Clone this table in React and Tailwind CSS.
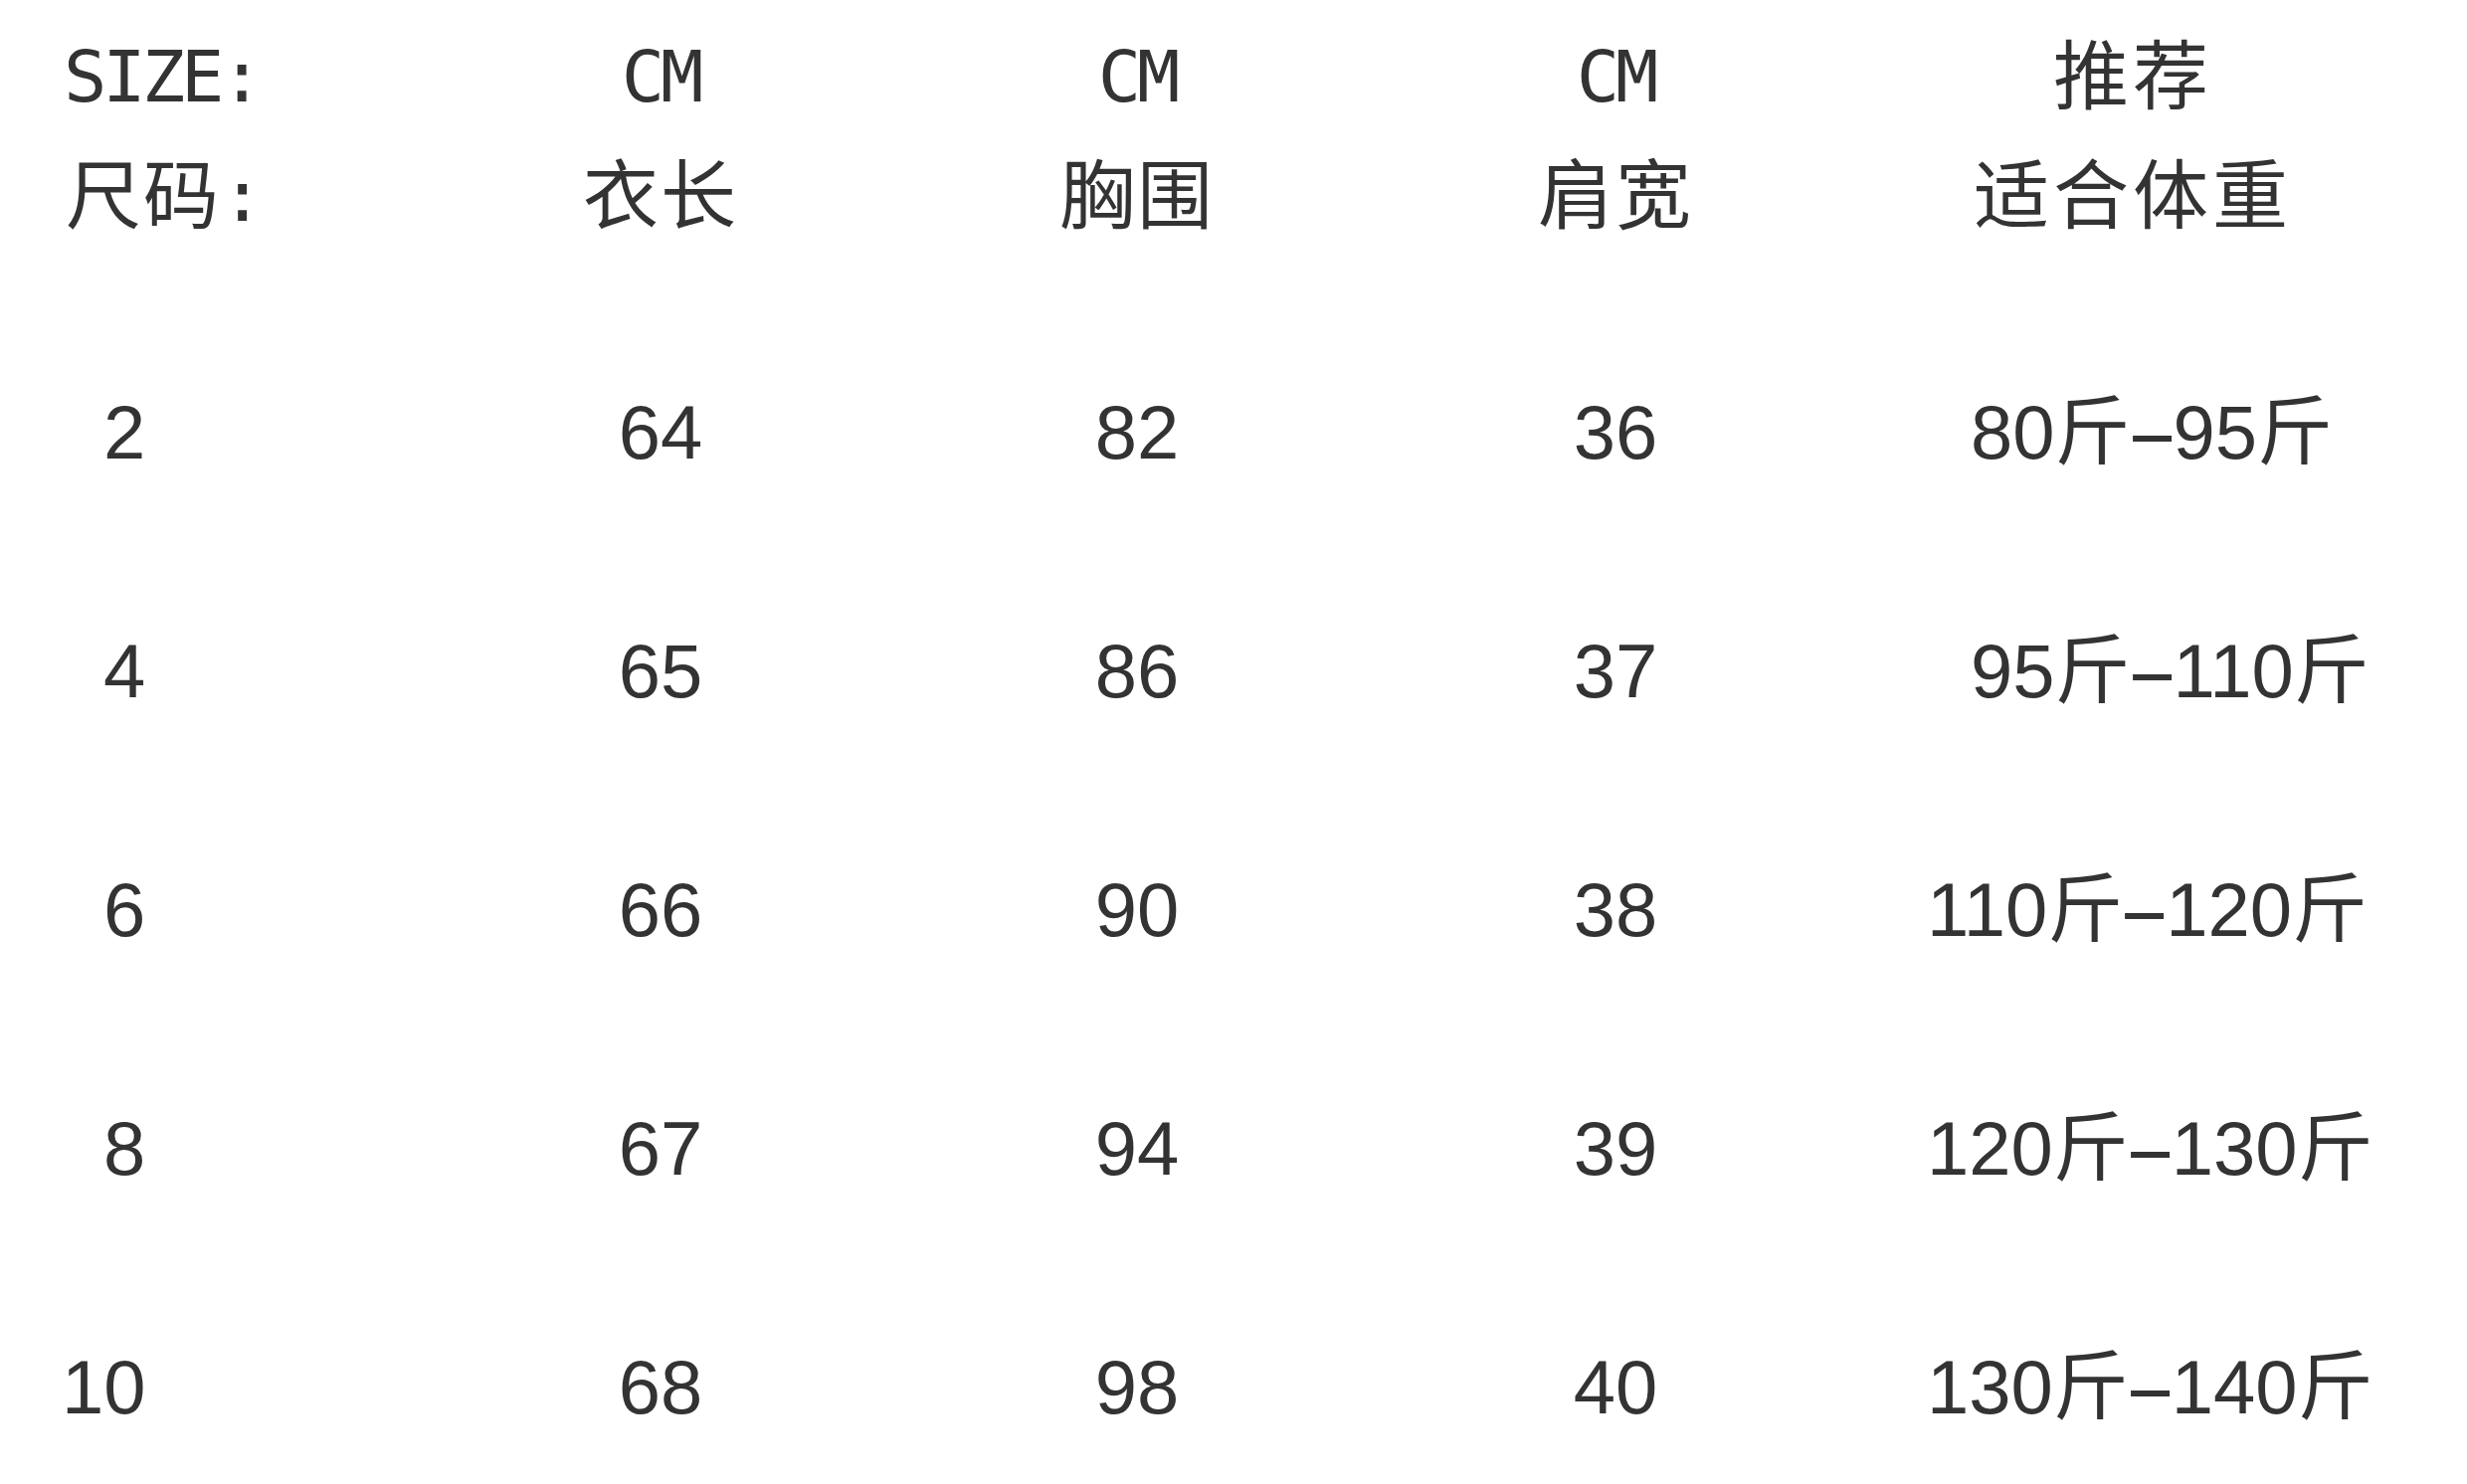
// Size chart: header rows + five data rows, laid out on a shared 5-column grid.

const GRID = 'grid grid-cols-[420px_488px_470px_492px_548px] items-center'
const MONO = "font-['DejaVu_Sans_Mono','Noto_Sans_CJK_SC',monospace] text-[72px] leading-none tracking-[-4px]"
const CJK = "font-['Noto_Sans_CJK_SC',sans-serif] text-[76px] leading-none tracking-[2px] pb-[12px]"
const NUM = "font-['Liberation_Sans','Noto_Sans_CJK_SC',sans-serif] text-[76px] leading-none"

const ROWS = [
  { size: '2', len: '64', chest: '82', shoulder: '36', from: '80', to: '95', pad: true },
  { size: '4', len: '65', chest: '86', shoulder: '37', from: '95', to: '110', pad: true },
  { size: '6', len: '66', chest: '90', shoulder: '38', from: '110', to: '120' },
  { size: '8', len: '67', chest: '94', shoulder: '39', from: '120', to: '130' },
  { size: '10', len: '68', chest: '98', shoulder: '40', from: '130', to: '140' },
]

function Dash() {
  return (
    <span className="inline-block w-[43px] text-center scale-x-[2.1]">-</span>
  )
}

function Weight({ from, to, pad }) {
  return (
    <span className={pad ? 'ml-[44px]' : ''}>
      {from}斤<Dash />{to}斤
    </span>
  )
}

export default function App() {
  return (
    <div className="h-[1492px] w-full overflow-hidden bg-white text-[#333] pt-[17px]">
      {/* ── Header line 1 ── */}
      <div className={`${GRID} h-[120px]`}>
        <div className={`${MONO} pl-[64px]`}>SIZE:</div>
        <div className={`${MONO} text-center`}>CM</div>
        <div className={`${MONO} text-center`}>CM</div>
        <div className={`${MONO} text-center`}>CM</div>
        <div className={`${CJK} text-center tracking-[4px]`}>推荐</div>
      </div>

      {/* ── Header line 2 ── */}
      <div className={`${GRID} h-[120px]`}>
        <div className="pl-[66px] flex items-center">
          <span className={CJK}>尺码</span>
          <span className={MONO}>:</span>
        </div>
        <div className={`${CJK} text-center`}>衣长</div>
        <div className={`${CJK} text-center`}>胸围</div>
        <div className={`${CJK} text-center`}>肩宽</div>
        <div className={`${CJK} text-center tracking-[4px]`}>适合体重</div>
      </div>

      {/* ── Data ── */}
      <div className="mt-[58px] flex flex-col">
        {ROWS.map(r => (
          <div key={r.size} className={`${GRID} h-[240px] ${NUM}`}>
            <div className="pl-[62px]">
              <span className={r.size.length === 1 ? 'ml-[42px]' : ''}>{r.size}</span>
            </div>
            <div className="text-center">{r.len}</div>
            <div className="text-center">{r.chest}</div>
            <div className="text-center">{r.shoulder}</div>
            <div className="pl-[67px] whitespace-nowrap">
              <Weight from={r.from} to={r.to} pad={r.pad} />
            </div>
          </div>
        ))}
      </div>
    </div>
  )
}
